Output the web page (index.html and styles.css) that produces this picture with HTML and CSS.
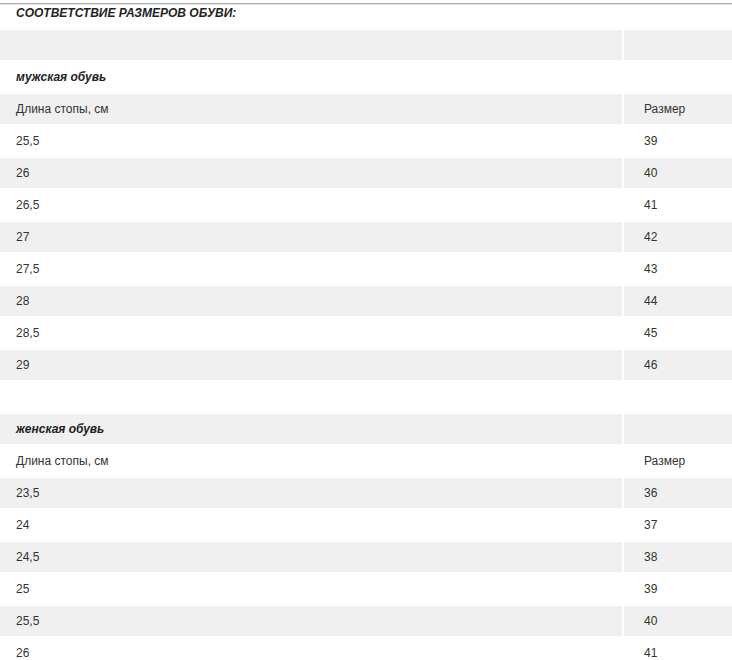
FILE: index.html
```html
<!DOCTYPE html>
<html lang="ru">
<head>
<meta charset="utf-8">
<title>Соответствие размеров обуви</title>
<link rel="stylesheet" href="styles.css">
</head>
<body>
<div class="page">
  <div class="title">СООТВЕТСТВИЕ РАЗМЕРОВ ОБУВИ:</div>
  <table class="sizes">
    <colgroup><col class="c1"><col class="c2"></colgroup>
    <tbody>
      <tr class="g"><td></td><td></td></tr>
      <tr class="w"><td class="sec">мужская обувь</td><td></td></tr>
      <tr class="g"><td>Длина стопы, см</td><td>Размер</td></tr>
      <tr class="w"><td>25,5</td><td>39</td></tr>
      <tr class="g"><td>26</td><td>40</td></tr>
      <tr class="w"><td>26,5</td><td>41</td></tr>
      <tr class="g"><td>27</td><td>42</td></tr>
      <tr class="w"><td>27,5</td><td>43</td></tr>
      <tr class="g"><td>28</td><td>44</td></tr>
      <tr class="w"><td>28,5</td><td>45</td></tr>
      <tr class="g"><td>29</td><td>46</td></tr>
      <tr class="w"><td></td><td></td></tr>
      <tr class="g"><td class="sec">женская обувь</td><td></td></tr>
      <tr class="w"><td>Длина стопы, см</td><td>Размер</td></tr>
      <tr class="g"><td>23,5</td><td>36</td></tr>
      <tr class="w"><td>24</td><td>37</td></tr>
      <tr class="g"><td>24,5</td><td>38</td></tr>
      <tr class="w"><td>25</td><td>39</td></tr>
      <tr class="g"><td>25,5</td><td>40</td></tr>
      <tr class="w"><td>26</td><td>41</td></tr>
    </tbody>
  </table>
</div>
</body>
</html>
```

FILE: styles.css
```css
html, body {
  margin: 0;
  padding: 0;
  background: #fff;
  overflow: hidden;
}

body {
  font-family: "Liberation Sans", Arial, sans-serif;
  font-size: 12px;
  color: #333;
}

.page {
  margin-top: 3px;
  border-top: 1px solid #a8a8a8;
  box-shadow: inset 0 1px 0 #e4e4e4;
  width: 732px;
  overflow: hidden;
}

.title {
  height: 24px;
  line-height: 18px;
  padding-left: 16px;
  font-weight: bold;
  font-style: italic;
  color: #222;
}

.sizes {
  border-collapse: separate;
  border-spacing: 2px;
  margin-left: -2px;
  table-layout: fixed;
  width: 736px;
}

.c1 { width: 622px; }
.c2 { width: 108px; }

.sizes td {
  height: 30px;
  padding: 0;
  vertical-align: middle;
  line-height: 14px;
  white-space: nowrap;
}

.sizes td:first-child {
  padding-left: 16px;
}

.sizes td:last-child {
  padding-left: 20px;
}

.sizes .sec {
  font-weight: bold;
  font-style: italic;
  color: #222;
}

.g td {
  background: #f0f0f0;
}

.w td {
  background: #fff;
}
```
